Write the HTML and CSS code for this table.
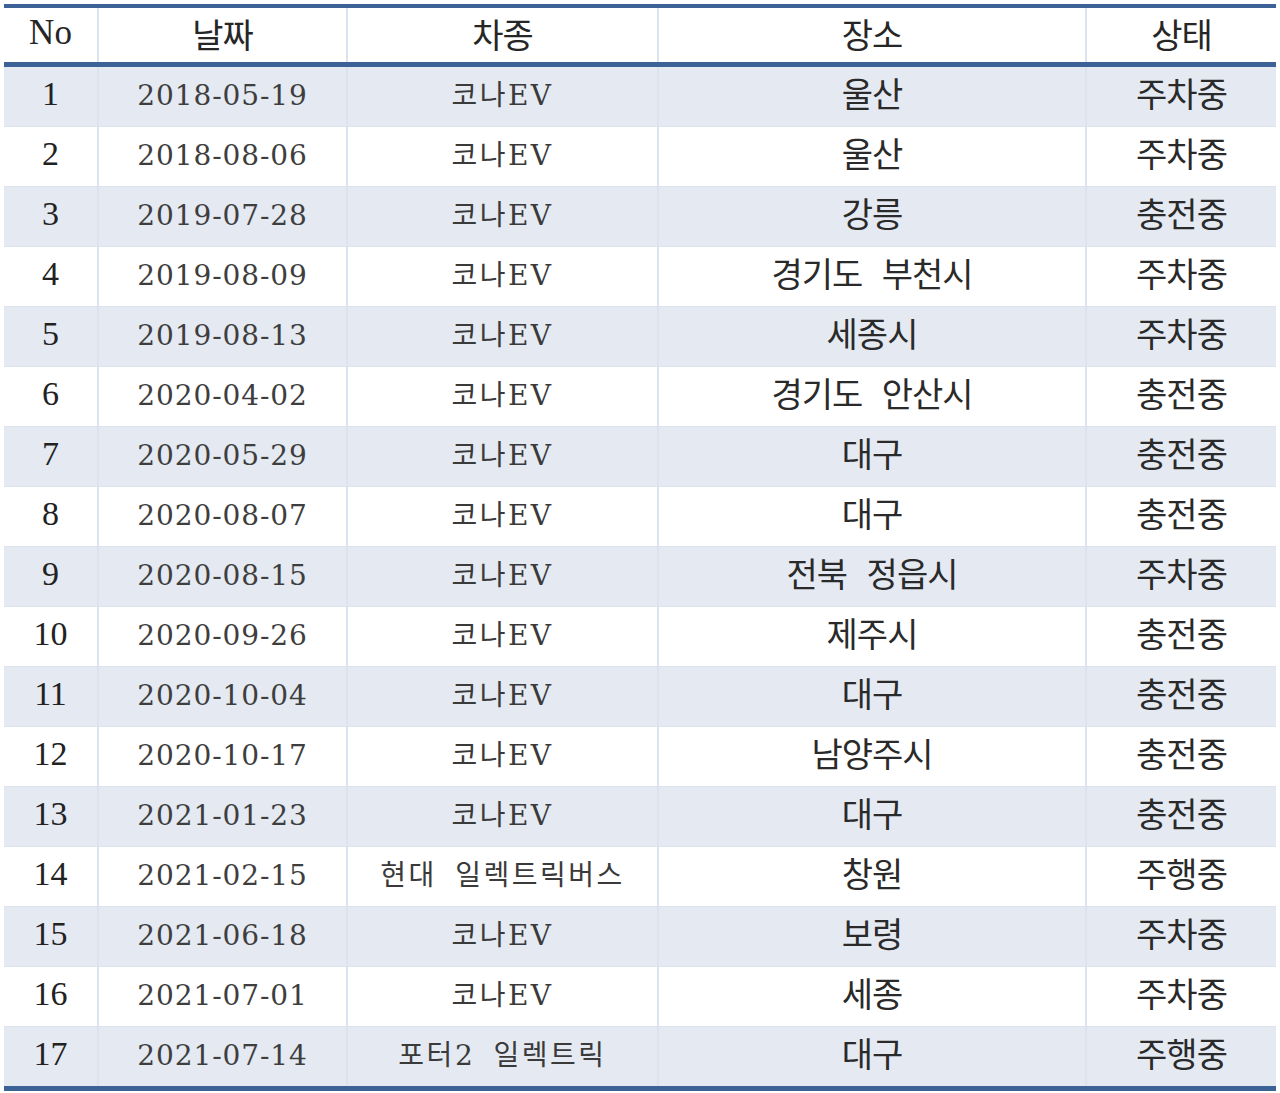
FILE: index.html
```html
<!DOCTYPE html>
<html lang="ko">
<head>
<meta charset="utf-8">
<title>차량 목록</title>
<link rel="stylesheet" href="styles.css">
</head>
<body>
<table class="tbl">
  <colgroup>
    <col class="c-no"><col class="c-date"><col class="c-car"><col class="c-place"><col class="c-state">
  </colgroup>
  <thead>
    <tr><th class="no">No</th><th>날짜</th><th>차종</th><th>장소</th><th>상태</th></tr>
  </thead>
  <tbody>
    <tr><td class="no">1</td><td class="date">2018-05-19</td><td class="car">코나EV</td><td class="kr">울산</td><td class="kr">주차중</td></tr>
    <tr><td class="no">2</td><td class="date">2018-08-06</td><td class="car">코나EV</td><td class="kr">울산</td><td class="kr">주차중</td></tr>
    <tr><td class="no">3</td><td class="date">2019-07-28</td><td class="car">코나EV</td><td class="kr">강릉</td><td class="kr">충전중</td></tr>
    <tr><td class="no">4</td><td class="date">2019-08-09</td><td class="car">코나EV</td><td class="kr">경기도 부천시</td><td class="kr">주차중</td></tr>
    <tr><td class="no">5</td><td class="date">2019-08-13</td><td class="car">코나EV</td><td class="kr">세종시</td><td class="kr">주차중</td></tr>
    <tr><td class="no">6</td><td class="date">2020-04-02</td><td class="car">코나EV</td><td class="kr">경기도 안산시</td><td class="kr">충전중</td></tr>
    <tr><td class="no">7</td><td class="date">2020-05-29</td><td class="car">코나EV</td><td class="kr">대구</td><td class="kr">충전중</td></tr>
    <tr><td class="no">8</td><td class="date">2020-08-07</td><td class="car">코나EV</td><td class="kr">대구</td><td class="kr">충전중</td></tr>
    <tr><td class="no">9</td><td class="date">2020-08-15</td><td class="car">코나EV</td><td class="kr">전북 정읍시</td><td class="kr">주차중</td></tr>
    <tr><td class="no">10</td><td class="date">2020-09-26</td><td class="car">코나EV</td><td class="kr">제주시</td><td class="kr">충전중</td></tr>
    <tr><td class="no">11</td><td class="date">2020-10-04</td><td class="car">코나EV</td><td class="kr">대구</td><td class="kr">충전중</td></tr>
    <tr><td class="no">12</td><td class="date">2020-10-17</td><td class="car">코나EV</td><td class="kr">남양주시</td><td class="kr">충전중</td></tr>
    <tr><td class="no">13</td><td class="date">2021-01-23</td><td class="car">코나EV</td><td class="kr">대구</td><td class="kr">충전중</td></tr>
    <tr><td class="no">14</td><td class="date">2021-02-15</td><td class="car">현대 일렉트릭버스</td><td class="kr">창원</td><td class="kr">주행중</td></tr>
    <tr><td class="no">15</td><td class="date">2021-06-18</td><td class="car">코나EV</td><td class="kr">보령</td><td class="kr">주차중</td></tr>
    <tr><td class="no">16</td><td class="date">2021-07-01</td><td class="car">코나EV</td><td class="kr">세종</td><td class="kr">주차중</td></tr>
    <tr><td class="no">17</td><td class="date">2021-07-14</td><td class="car">포터2 일렉트릭</td><td class="kr">대구</td><td class="kr">주행중</td></tr>
  </tbody>
</table>
</body>
</html>
```
FILE: styles.css
```css
html, body {
  margin: 0;
  padding: 0;
  background: #ffffff;
}

body {
  padding: 4px 4px 0 4px;
}

.tbl {
  width: 1272px;
  border-collapse: collapse;
  table-layout: fixed;
  border-top: 4px solid #3b6196;
  border-bottom: 5px solid #3b6196;
  color: #2e2e2e;
}

.c-no { width: 94px; }
.c-date { width: 249px; }
.c-car { width: 311px; }
.c-place { width: 428px; }
.c-state { width: 190px; }

.tbl th,
.tbl td {
  padding: 0;
  text-align: center;
  vertical-align: middle;
  border-left: 2px solid #dbe3ee;
  white-space: nowrap;
  line-height: 1.15;
}

.tbl th:first-child,
.tbl td:first-child {
  border-left: none;
}

.tbl thead th {
  height: 51px;
  padding-bottom: 3px;
  font-family: "Noto Sans CJK KR", sans-serif;
  font-weight: 400;
  font-size: 34px;
  letter-spacing: -1px;
  color: #262626;
  border-bottom: 5px solid #3b6196;
  background: #ffffff;
}

.tbl thead th.no {
  font-family: "Liberation Serif", serif;
  font-size: 35px;
  letter-spacing: 0;
}

.tbl tbody td {
  height: 59px;
  border-top: 1px solid #dbe3ee;
}

.tbl tbody tr:first-child td {
  border-top: none;
}

.tbl tbody tr:nth-child(odd) td {
  background: #e4e9f2;
}

.tbl tbody tr:nth-child(even) td {
  background: #ffffff;
}

.tbl td.no {
  height: 54px;
  padding-bottom: 5px;
  font-family: "Liberation Serif", serif;
  font-size: 34px;
  color: #222222;
}

.tbl td.date {
  font-family: "DejaVu Serif", serif;
  font-size: 28px;
  letter-spacing: 0.9px;
  color: #3e3e3e;
}

.tbl td.car {
  font-family: "DejaVu Serif", "Noto Sans CJK KR", serif;
  font-size: 28px;
  letter-spacing: 2.5px;
  word-spacing: 7px;
  color: #3a3a3a;
}

.tbl td.kr {
  height: 52px;
  padding-bottom: 7px;
  font-family: "Noto Sans CJK KR", sans-serif;
  font-size: 34px;
  letter-spacing: -1px;
  word-spacing: 11px;
  color: #2a2a2a;
}
```
